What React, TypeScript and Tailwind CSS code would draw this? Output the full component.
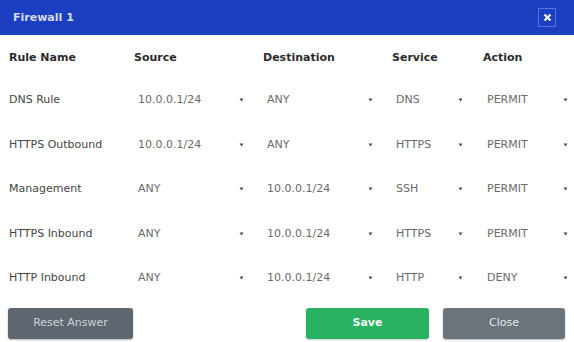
const rules = [
  { name: "DNS Rule", source: "10.0.0.1/24", dest: "ANY", service: "DNS", action: "PERMIT" },
  { name: "HTTPS Outbound", source: "10.0.0.1/24", dest: "ANY", service: "HTTPS", action: "PERMIT" },
  { name: "Management", source: "ANY", dest: "10.0.0.1/24", service: "SSH", action: "PERMIT" },
  { name: "HTTPS Inbound", source: "ANY", dest: "10.0.0.1/24", service: "HTTPS", action: "PERMIT" },
  { name: "HTTP Inbound", source: "ANY", dest: "10.0.0.1/24", service: "HTTP", action: "DENY" },
];

function Caret() {
  return (
    <svg width="5" height="4" viewBox="0 0 5 4" className="shrink-0">
      <path d="M0.5 0.5 L4.5 0.5 L2.5 3.5 Z" fill="#4a4a4a" />
    </svg>
  );
}

function SelectCell({ value, width }: { value: string; width: string }) {
  return (
    <div className={`flex items-center justify-between pl-1 ${width}`}>
      <span className="text-[#6b6b6b]">{value}</span>
      <Caret />
    </div>
  );
}

export default function App() {
  return (
    <div
      className="w-[574px] h-[342px] bg-white overflow-hidden flex flex-col"
      style={{ fontFamily: '"DejaVu Sans", Verdana, sans-serif' }}
    >
      {/* Title bar */}
      <div className="h-[35px] bg-[#1c3ec0] flex items-center justify-between pl-[13px] pr-[18px] shrink-0">
        <span className="text-[11px] font-bold text-[#d6dcec] pt-[1px]">Firewall 1</span>
        <button className="w-[18px] h-[19px] border border-[#5573d8] flex items-center justify-center">
          <svg width="9" height="9" viewBox="0 0 9 9">
            <path d="M1.5 1.5 L7.5 7.5 M7.5 1.5 L1.5 7.5" stroke="#f2f4fa" strokeWidth="2.2" />
          </svg>
        </button>
      </div>

      {/* Table */}
      <div className="px-[9px] pt-[4px] text-[11px]">
        <div className="grid grid-cols-[125px_129px_129px_91px_1fr] h-[39px] items-center font-bold text-[#2b2b2b]">
          <span>Rule Name</span>
          <span>Source</span>
          <span>Destination</span>
          <span>Service</span>
          <span>Action</span>
        </div>
        {rules.map((r) => (
          <div
            key={r.name}
            className="grid grid-cols-[125px_129px_129px_91px_1fr] h-[44.5px] items-center"
          >
            <span className="text-[#454545]">{r.name}</span>
            <SelectCell value={r.source} width="w-[110px]" />
            <SelectCell value={r.dest} width="w-[110px]" />
            <SelectCell value={r.service} width="w-[71px]" />
            <SelectCell value={r.action} width="w-[85px]" />
          </div>
        ))}
      </div>

      {/* Footer buttons */}
      <div className="flex justify-between pl-[8px] pr-[9px] pt-[7px] text-[11px]">
        <button className="w-[125px] h-[31px] rounded-[3px] bg-[#5e6670] text-[#cdd2d8] shadow-[0_1px_2px_rgba(0,0,0,0.3)]">
          Reset Answer
        </button>
        <div className="flex gap-[14px]">
          <button className="w-[123px] h-[31px] rounded-[3px] bg-[#28b262] text-[#f2fbf5] font-bold shadow-[0_1px_2px_rgba(0,0,0,0.2)]">
            Save
          </button>
          <button className="w-[122px] h-[31px] rounded-[3px] bg-[#6b737b] text-[#e6e8ea] shadow-[0_1px_2px_rgba(0,0,0,0.3)]">
            Close
          </button>
        </div>
      </div>
    </div>
  );
}
